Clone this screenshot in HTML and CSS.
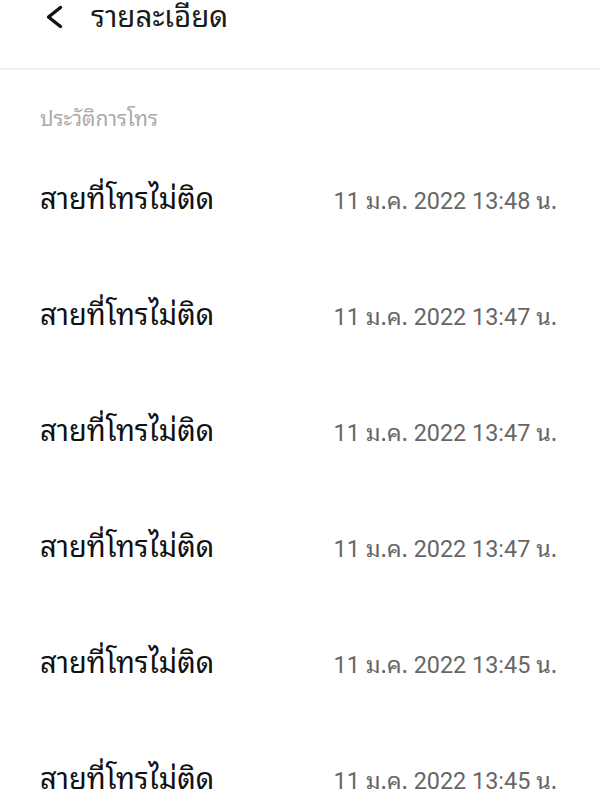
FILE: index.html
```html
<!DOCTYPE html>
<html lang="th">
<head>
<meta charset="utf-8">
<link rel="stylesheet" href="styles.css">
</head>
<body>
<header class="topbar">
  <svg class="back" width="20" height="24" viewBox="0 0 20 24"><path d="M16.5 2.5 L4.5 12 L16.5 21.5" fill="none" stroke="#111" stroke-width="3.4" stroke-linecap="round" stroke-linejoin="round"/></svg>
  <h1 class="title">รายละเอียด</h1>
</header>
<main class="content">
  <div class="section-label">ประวัติการโทร</div>
  <ul class="calls">
    <li class="call"><span class="status">สายที่โทรไม่ติด</span><span class="time">11 <span class="th">ม.ค.</span> 2022 13:48 <span class="th">น.</span></span></li>
    <li class="call"><span class="status">สายที่โทรไม่ติด</span><span class="time">11 <span class="th">ม.ค.</span> 2022 13:47 <span class="th">น.</span></span></li>
    <li class="call"><span class="status">สายที่โทรไม่ติด</span><span class="time">11 <span class="th">ม.ค.</span> 2022 13:47 <span class="th">น.</span></span></li>
    <li class="call"><span class="status">สายที่โทรไม่ติด</span><span class="time">11 <span class="th">ม.ค.</span> 2022 13:47 <span class="th">น.</span></span></li>
    <li class="call"><span class="status">สายที่โทรไม่ติด</span><span class="time">11 <span class="th">ม.ค.</span> 2022 13:45 <span class="th">น.</span></span></li>
    <li class="call"><span class="status">สายที่โทรไม่ติด</span><span class="time">11 <span class="th">ม.ค.</span> 2022 13:45 <span class="th">น.</span></span></li>
  </ul>
</main>
</body>
</html>
```
FILE: styles.css
```css
html, body {
  margin: 0;
  padding: 0;
  background: #fff;
  font-family: Roboto, "Noto Sans Thai Looped", sans-serif;
  color: #111;
  overflow: hidden;
}
.topbar {
  height: 70px;
  border-bottom: 2px solid #f0f0f0;
  display: flex;
  align-items: flex-start;
  padding: 0 0 0 44px;
  box-sizing: border-box;
  gap: 27px;
}
.back { margin-top: 5px; }
.title {
  margin: 0;
  font-family: "Noto Sans Thai Looped", Roboto, sans-serif;
  font-size: 29.5px;
  font-weight: 400;
  line-height: 28px;
  color: #1a1a1a;
}
.content { padding: 0 43px 0 40px; }
.section-label {
  margin-top: 34px;
  font-family: "Noto Sans Thai Looped", Roboto, sans-serif;
  font-size: 21px;
  color: #aaa;
  line-height: 26px;
}
.calls {
  list-style: none;
  margin: 0;
  padding: 0;
}
.call {
  height: 116px;
  display: flex;
  justify-content: space-between;
  align-items: baseline;
  padding-top: 46px;
  box-sizing: border-box;
}
.status {
  font-family: "Noto Sans Thai Looped", Roboto, sans-serif;
  font-size: 29px;
  line-height: 40px;
  color: #111;
}
.time {
  font-family: Roboto, "Noto Sans Thai Looped", sans-serif;
  font-size: 23.4px;
  line-height: 40px;
  color: #666;
}
.th { font-family: "Noto Sans Thai Looped", Roboto, sans-serif; }
```
